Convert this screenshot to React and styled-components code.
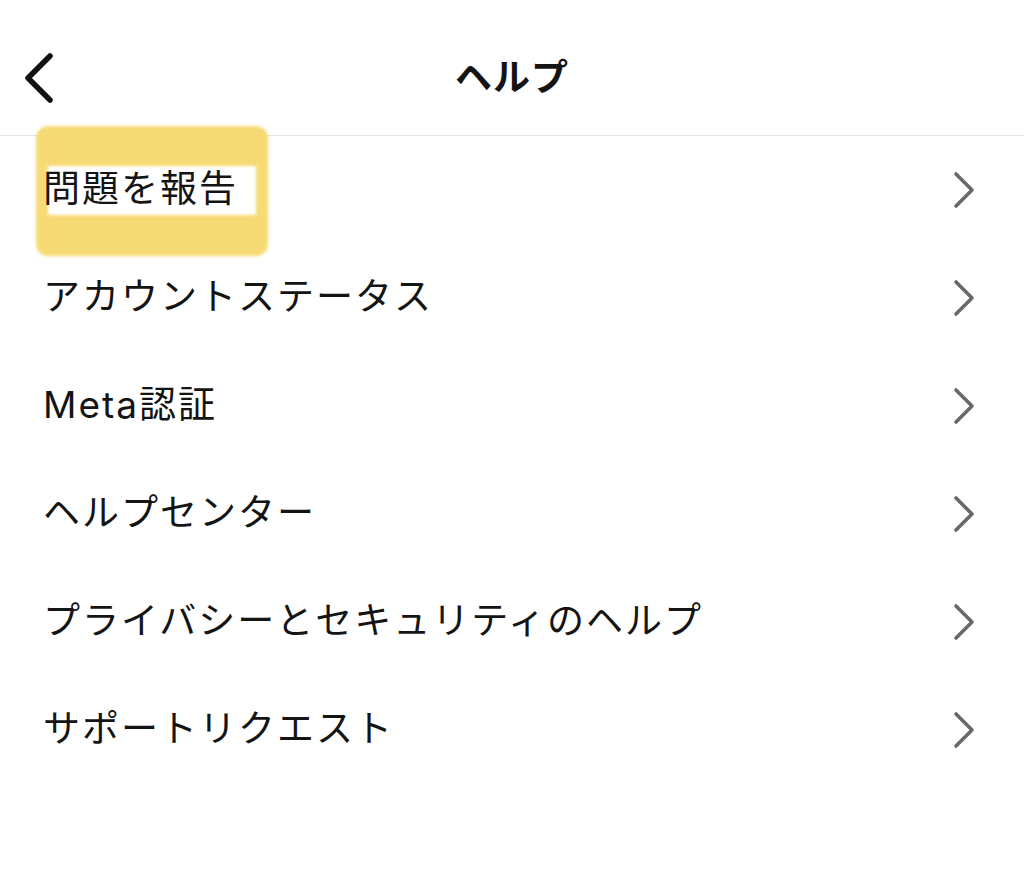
import React from "react";
import styled, { createGlobalStyle } from "styled-components";

const ITEMS = [
  "問題を報告",
  "アカウントステータス",
  "Meta認証",
  "ヘルプセンター",
  "プライバシーとセキュリティのヘルプ",
  "サポートリクエスト",
];

function App() {
  return (
    <>
      <GlobalStyle />
      <Screen>
        <Header>
          <BackButton aria-label="戻る">
            <svg width="34" height="52" viewBox="0 0 34 52" fill="none">
              <path
                d="M28 4 L6 26 L28 48"
                stroke="#111"
                strokeWidth="5.5"
                strokeLinecap="round"
                strokeLinejoin="round"
              />
            </svg>
          </BackButton>
          <Title>ヘルプ</Title>
          <span />
        </Header>
        <List>
          {ITEMS.map((label, idx) => (
            <Row key={label}>
              {idx === 0 && <Highlight />}
              <Label>{label}</Label>
              <Chevron />
            </Row>
          ))}
        </List>
      </Screen>
    </>
  );
}

export default App;

function Chevron() {
  return (
    <ChevronBox>
      <svg width="24" height="38" viewBox="0 0 24 38" fill="none">
        <path
          d="M4 3 L20 19 L4 35"
          stroke="#66686d"
          strokeWidth="3.6"
          strokeLinecap="round"
          strokeLinejoin="round"
        />
      </svg>
    </ChevronBox>
  );
}

//style
const GlobalStyle = createGlobalStyle`
  body {
    margin: 0;
    background: #fff;
    font-family: Inter, "Noto Sans CJK JP", "Noto Sans", sans-serif;
    color: #141414;
  }
`;

const Screen = styled.div`
  width: 1024px;
  height: 880px;
  background: #fff;
  overflow: hidden;
`;

const Header = styled.header`
  display: grid;
  grid-template-columns: 1fr auto 1fr;
  align-items: center;
  height: 136px;
  padding: 20px 0 0 22px;
  box-sizing: border-box;
  border-bottom: 1px solid #e5e5e5;
`;

const BackButton = styled.button`
  justify-self: start;
  padding: 0;
  border: none;
  background: none;
  display: flex;
`;

const Title = styled.h1`
  margin: 0 0 0 -22px;
  font-size: 37px;
  font-weight: 700;
  letter-spacing: 1px;
  line-height: 1;
`;

const List = styled.ul`
  margin: 0;
  padding: 0;
  list-style: none;
`;

const Row = styled.li`
  position: relative;
  display: flex;
  align-items: center;
  justify-content: space-between;
  height: 108px;
  padding: 0 48px 4px 43px;
  box-sizing: border-box;
`;

/* yellow marker annotation drawn over the first row */
const Highlight = styled.div`
  position: absolute;
  left: 36px;
  top: -10px;
  width: 232px;
  height: 130px;
  border-radius: 12px;
  background: #f6d96c;
  filter: blur(1.5px);
  opacity: 0.95;

  &::after {
    content: "";
    position: absolute;
    left: 12px;
    top: 40px;
    width: 208px;
    height: 49px;
    background: #fff;
  }
`;

const Label = styled.span`
  position: relative;
  font-size: 37px;
  font-weight: 400;
  letter-spacing: 2px;
  line-height: 1;
`;

const ChevronBox = styled.span`
  display: flex;
  margin-top: 4px;
`;
